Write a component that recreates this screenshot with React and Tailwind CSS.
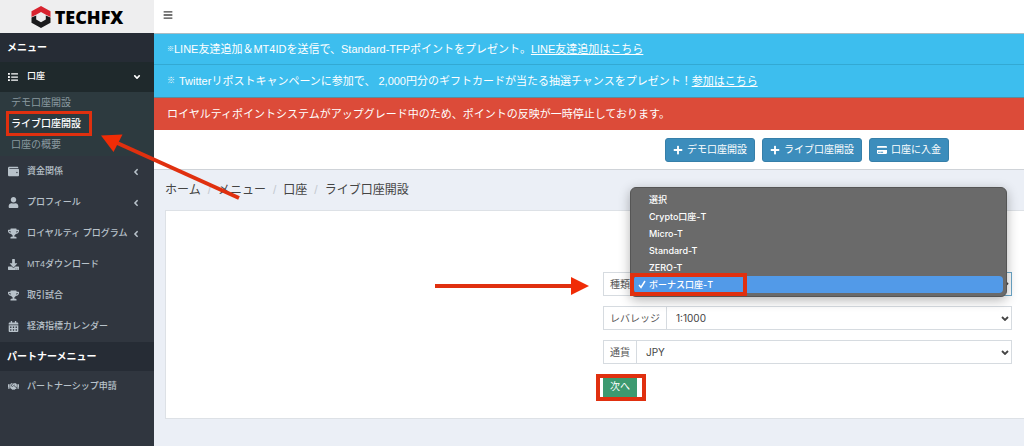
import { useState } from "react"
import {
  FaAngleDown,
  FaAngleLeft,
  FaBars,
  FaCalendarAlt,
  FaCreditCard,
  FaDownload,
  FaHandshake,
  FaList,
  FaPlus,
  FaTrophy,
  FaUser,
  FaWallet,
} from "react-icons/fa"

const accountLinks = [
  { label: "デモ口座開設" },
  { label: "ライブ口座開設", active: true },
  { label: "口座の概要" },
]

const menuItems = [
  { label: "資金関係", icon: FaWallet, expandable: true },
  { label: "プロフィール", icon: FaUser, expandable: true },
  { label: "ロイヤルティ プログラム", icon: FaTrophy, expandable: true },
  { label: "MT4ダウンロード", icon: FaDownload },
  { label: "取引試合", icon: FaTrophy },
  { label: "経済指標カレンダー", icon: FaCalendarAlt },
]

const quickActions = [
  { label: "デモ口座開設", icon: FaPlus },
  { label: "ライブ口座開設", icon: FaPlus },
  { label: "口座に入金", icon: FaCreditCard },
]

const breadcrumbs = ["ホーム", "メニュー", "口座", "ライブ口座開設"]

const accountTypes = ["選択", "Crypto口座-T", "Micro-T", "Standard-T", "ZERO-T", "ボーナス口座-T"]

function Logo() {
  return (
    <a href="#" className="flex h-[33px] items-center justify-center gap-1 bg-[#eeeeef] text-black">
      <svg viewBox="0 0 20 22" className="h-[22px] w-5" aria-hidden="true">
        <path d="M10 0 19.5 5.2V11L14.5 8.500 10 6 5.500 8.500 0.500 11V5.200Z" fill="#d8232f" />
        <path d="M0.500 11.500 5.200 9.500V13.500L10 16.200 14.800 13.500V9.500L19.500 11.500V16.800L10 22 0.500 16.800Z" fill="#1b1b1d" />
      </svg>
      <span className="font-['Open_Sans',sans-serif] text-[18px] leading-none font-extrabold">TECHFX</span>
    </a>
  )
}

function SectionTitle({ children }) {
  return (
    <h2 className="flex h-[29px] items-center bg-[#262c35] px-[7px] text-[10px] font-bold text-white">{children}</h2>
  )
}

function MenuItem({ item }) {
  const Icon = item.icon
  return (
    <a
      href="#"
      className="flex h-[31px] items-center pr-[13px] pl-2 text-[9px] font-medium whitespace-nowrap text-[#b8c2ca]"
    >
      <span className="w-[19px]">
        <Icon className="text-[11px]" />
      </span>
      {item.label}
      {item.expandable && <FaAngleLeft className="ml-auto text-[10px]" />}
    </a>
  )
}

function Sidebar() {
  return (
    <aside className="w-[154px] shrink-0 bg-[#30363f]">
      <Logo />
      <nav>
        <SectionTitle>メニュー</SectionTitle>
        <a href="#" className="flex h-[30px] items-center bg-[#1f292c] pr-[12px] pl-2 text-[9px] font-medium text-white">
          <span className="w-[19px]">
            <FaList className="text-[10px]" />
          </span>
          口座
          <FaAngleDown className="ml-auto text-[10px]" />
        </a>
        <ul className="bg-[#2d3a3f] pb-px">
          {accountLinks.map((link) => (
            <li key={link.label} className="relative flex h-[21px] items-center pl-[11px] text-[10px]">
              <a href="#" className={link.active ? "font-medium text-white" : "text-[#8a999f]"}>
                {link.label}
              </a>
              {link.active && (
                <span className="absolute -inset-y-[2px] left-[6px] w-[86px] border-[3px] border-[#e0300f]"></span>
              )}
            </li>
          ))}
        </ul>
        {menuItems.map((item) => (
          <MenuItem key={item.label} item={item} />
        ))}
        <SectionTitle>パートナーメニュー</SectionTitle>
        <MenuItem item={{ label: "パートナーシップ申請", icon: FaHandshake }} />
      </nav>
    </aside>
  )
}

function Notices() {
  return (
    <div className="text-[11px] whitespace-nowrap text-white">
      <p className="flex h-[31px] items-center border-b border-[#33a9d3] bg-[#3dbeee] px-[13px]">
        <span className="text-[7px] font-bold">※</span>
        LINE友達追加＆MT4IDを送信で、Standard-TFPポイントをプレゼント。
        <a href="#" className="underline">
          LINE友達追加はこちら
        </a>
      </p>
      <p className="flex h-[33px] items-center border-b border-[#5b8c9c] bg-[#3dbeee] px-[13px]">
        <span className="mr-1 text-[8px] font-bold">※</span>
        Twitterリポストキャンペーンに参加で、 2,000円分のギフトカードが当たる抽選チャンスをプレゼント！
        <a href="#" className="underline">
          参加はこちら
        </a>
      </p>
      <p className="flex h-8 items-center bg-[#dc4b39] px-[13px]">
        ロイヤルティポイントシステムがアップグレード中のため、ポイントの反映が一時停止しております。
      </p>
    </div>
  )
}

function SelectField({ id, label, value, focused, children }) {
  return (
    <div className="relative flex h-6 text-[10px] text-[#555]">
      <label htmlFor={id} className="flex items-center border border-r-0 border-[#d6dbe0] px-[6px]">
        {label}
      </label>
      <div className="relative flex-1">
        <select
          id={id}
          defaultValue={value}
          className={`size-full appearance-none border bg-white pl-[9px] font-['Inter','Noto_Sans_CJK_JP',sans-serif] text-[#444] outline-none ${
            focused ? "border-[#6ba7c9]" : "border-[#d6dbe0]"
          }`}
        >
          <option>{value}</option>
        </select>
        <svg
          viewBox="0 0 8 5"
          className="pointer-events-none absolute top-[10px] right-[3px] h-[5px] w-2"
          fill="none"
          stroke="#444"
          strokeWidth="1.8"
        >
          <path d="M1 1 4 4 7 1" />
        </svg>
      </div>
      {children}
    </div>
  )
}

function AccountTypeMenu({ selected, onSelect }) {
  return (
    <ul
      role="listbox"
      aria-label="種類"
      className="absolute -top-[85px] right-[5px] left-[27px] z-10 rounded-md border border-[#555] bg-[#6a6a6a] px-[3px] py-[3px] font-['Inter','Noto_Sans_CJK_JP',sans-serif] text-[9px] font-medium text-white shadow-[0_3px_12px_rgba(0,0,0,0.3)]"
    >
      {accountTypes.map((type) => {
        const isSelected = type === selected
        return (
          <li
            key={type}
            role="option"
            aria-selected={isSelected}
            onClick={() => onSelect(type)}
            className={`relative flex h-[17px] items-center rounded-sm pl-[15px] ${isSelected ? "bg-[#529ae8]" : ""}`}
          >
            {isSelected && (
              <>
                <svg
                  viewBox="0 0 8 9"
                  className="absolute left-1 h-[9px] w-2"
                  fill="none"
                  stroke="white"
                  strokeWidth="1.5"
                >
                  <path d="M1 5 3 7.500 7 1" />
                </svg>
                <span className="absolute -inset-y-[3px] -left-1 w-[117px] border-4 border-[#e0300f]"></span>
              </>
            )}
            {type}
          </li>
        )
      })}
    </ul>
  )
}

function AccountForm() {
  const [accountType, setAccountType] = useState("ボーナス口座-T")

  return (
    <form className="ml-auto flex w-1/2 flex-col gap-[10px] pr-3 pl-2" onSubmit={(e) => e.preventDefault()}>
      <SelectField id="type" label="種類" value={accountType} focused>
        <AccountTypeMenu selected={accountType} onSelect={setAccountType} />
      </SelectField>
      <SelectField id="leverage" label="レバレッジ" value="1:1000" />
      <SelectField id="currency" label="通貨" value="JPY" />
      <div className="relative flex">
        <button type="submit" className="h-6 bg-[#3c9a70] px-[7px] text-[10px] text-white">
          次へ
        </button>
        <span className="pointer-events-none absolute top-0 -left-[7px] h-[27px] w-[50px] border-4 border-[#e0300f]"></span>
      </div>
    </form>
  )
}

function Arrows() {
  return (
    <>
      <svg
        viewBox="0 0 140 66"
        className="pointer-events-none absolute top-[134px] left-[101px] h-[66px] w-[140px]"
        aria-hidden="true"
      >
        <path d="M14 8 138 64" stroke="#e0300f" strokeWidth="4" />
        <path d="M0 1.500 21.500 0.500 12.500 18Z" fill="#f02c06" />
      </svg>
      <svg
        viewBox="0 0 154 18"
        className="pointer-events-none absolute top-[277px] left-[435px] h-[18px] w-[154px]"
        aria-hidden="true"
      >
        <path d="M0 9H138" stroke="#e0300f" strokeWidth="4" />
        <path d="M136 0 154 9 136 18Z" fill="#f02c06" />
      </svg>
    </>
  )
}

export default function App() {
  return (
    <div className="relative flex min-h-screen overflow-hidden bg-[#ebeff6] font-['Liberation_Sans','Noto_Sans_CJK_JP',sans-serif]">
      <Sidebar />
      <main className="min-w-0 flex-1">
        <header className="flex h-[34px] items-center border-b border-[#a9bcc4] bg-white px-[9px] pb-1">
          <button type="button" aria-label="メニュー切替">
            <FaBars className="text-[10px] text-[#444]" />
          </button>
        </header>
        <Notices />
        <div className="flex h-10 items-center justify-end gap-[7px] border-b border-[#cfd3d8] bg-white pr-[75px]">
          {quickActions.map(({ label, icon: Icon }) => (
            <button
              key={label}
              type="button"
              className="flex h-6 items-center gap-1 rounded-[3px] border border-[#367fa9] bg-[#3c8dbc] px-[7px] text-[10px] whitespace-nowrap text-white"
            >
              <Icon className="text-[10px]" />
              {label}
            </button>
          ))}
        </div>
        <ol className="flex h-10 items-center gap-[7px] pl-[11px] text-[12px] text-[#444]">
          {breadcrumbs.map((crumb, index) => (
            <li key={crumb} className="flex gap-[7px]">
              {index > 0 && <span className="text-[#c4c9d0]">/</span>}
              {crumb}
            </li>
          ))}
        </ol>
        <section className="ml-[11px] border border-r-0 border-[#dde1e6] bg-white pt-[61px] pb-5">
          <AccountForm />
        </section>
      </main>
      <Arrows />
    </div>
  )
}
